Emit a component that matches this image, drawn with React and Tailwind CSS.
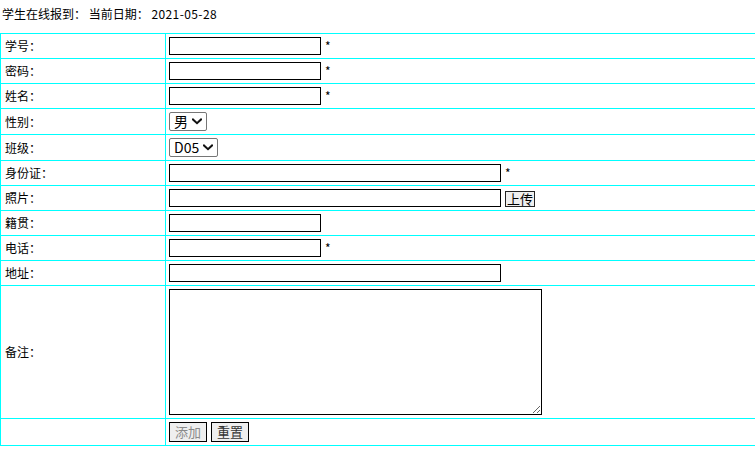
import React from "react";

const FONT = { fontFamily: '"Noto Sans CJK SC", "Noto Sans", sans-serif' };

function Chevron() {
  return (
    <svg width="10" height="7" viewBox="0 0 10 7" className="block">
      <path d="M1 1.5 L5 5.2 L9 1.5" fill="none" stroke="#111" strokeWidth="2" strokeLinecap="square" />
    </svg>
  );
}

function FakeSelect({ value, w }) {
  return (
    <div
      role="combobox"
      aria-label={value}
      className={`flex h-[19px] ${w} items-center justify-between rounded-[2px] border border-[#767676] bg-white pl-[4px] pr-[4px] text-[14px] leading-[17px] text-black`}
    >
      <span>{value}</span>
      <Chevron />
    </div>
  );
}

function TextInput({ w, type = "text" }) {
  return (
    <input
      type={type}
      className={`h-[18px] ${w} border border-black bg-white outline-none`}
    />
  );
}

function Star() {
  return <span className="ml-[4px] self-start mt-[1px] text-[12px] leading-[16px] text-black">*</span>;
}

function Label({ children }) {
  return (
    <div className="flex items-center border-r border-b border-[#00ffff] pl-[4px] text-[12px] leading-[16px] text-black">
      {children}
    </div>
  );
}

function Field({ children, align = "items-center" }) {
  return (
    <div className={`flex ${align} border-b border-[#00ffff] p-[3px]`}>{children}</div>
  );
}

export default function App() {
  return (
    <div className="w-[755px] h-[450px] overflow-hidden bg-white text-black" style={FONT}>
      <div className="h-[33px] pl-[2px] pt-[6px] text-[12px] leading-[16px]">
        学生在线报到：&nbsp;当前日期：&nbsp;<span className="tracking-[0.4px]">2021-05-28</span>
      </div>
      <div className="grid grid-cols-[165px_1fr] border-l border-t border-[#00ffff]">
        <Label>学号：</Label>
        <Field>
          <TextInput w="w-[152px]" />
          <Star />
        </Field>

        <Label>密码：</Label>
        <Field>
          <TextInput w="w-[152px]" type="password" />
          <Star />
        </Field>

        <Label>姓名：</Label>
        <Field>
          <TextInput w="w-[152px]" />
          <Star />
        </Field>

        <Label>性别：</Label>
        <Field>
          <FakeSelect value="男" w="w-[38px]" />
        </Field>

        <Label>班级：</Label>
        <Field>
          <FakeSelect value="D05" w="w-[49px]" />
        </Field>

        <Label>身份证：</Label>
        <Field>
          <TextInput w="w-[332px]" />
          <Star />
        </Field>

        <Label>照片：</Label>
        <Field align="items-end">
          <TextInput w="w-[332px]" />
          <button
            type="button"
            className="ml-[4px] h-[16px] border border-[#222] bg-[#efefef] px-[1px] text-[13px] leading-[14px] text-black"
            style={FONT}
          >
            上传
          </button>
        </Field>

        <Label>籍贯：</Label>
        <Field>
          <TextInput w="w-[152px]" />
        </Field>

        <Label>电话：</Label>
        <Field>
          <TextInput w="w-[152px]" />
          <Star />
        </Field>

        <Label>地址：</Label>
        <Field>
          <TextInput w="w-[332px]" />
        </Field>

        <Label>备注：</Label>
        <Field>
          <textarea className="block h-[126px] w-[373px] border border-black bg-white outline-none" />
        </Field>

        <Label></Label>
        <Field>
          <button
            type="button"
            className="h-[20px] w-[38px] border border-black bg-[#efefef] text-[13px] leading-[18px] text-[#8a8a8a]"
            style={FONT}
          >
            添加
          </button>
          <button
            type="button"
            className="ml-[4px] h-[20px] w-[38px] border border-black bg-[#efefef] text-[13px] leading-[18px] text-[#333]"
            style={FONT}
          >
            重置
          </button>
        </Field>
      </div>
    </div>
  );
}
